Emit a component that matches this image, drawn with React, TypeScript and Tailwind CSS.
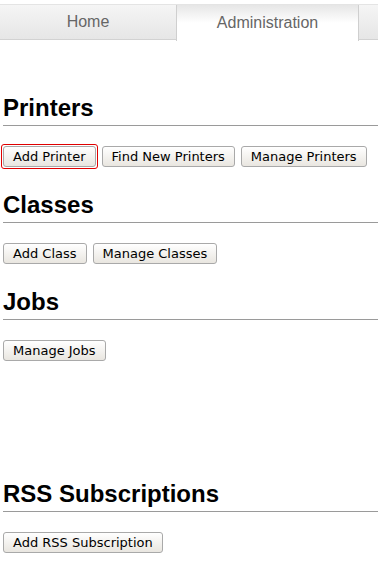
import React from "react";

const btn =
  "h-[21px] px-[9px] rounded-[3px] border border-[#a9a9a9] bg-gradient-to-b from-white to-[#e9e6e0] text-[13px] leading-[19px] text-black font-['DejaVu_Sans',sans-serif] whitespace-nowrap";

function Section({ title, buttons, first }: { title: string; buttons: string[]; first?: boolean }) {
  return (
    <div className="h-[97px] pl-[3px]">
      <h2 className="text-[24px] leading-[28px] font-bold text-black font-['Liberation_Sans',Arial,sans-serif]">
        {title}
      </h2>
      <div className="h-px bg-[#9a9a9a] mt-[3px]" />
      <div className="flex gap-[6px] mt-[20px]">
        {buttons.map((b, i) => (
          <div
            key={b}
            className={
              "flex " +
              (first && i === 0 ? "outline outline-1 outline-[#e00000] outline-offset-[1px] rounded-[1px]" : "")
            }
          >
            <button className={btn}>{b}</button>
          </div>
        ))}
      </div>
    </div>
  );
}

export default function App() {
  return (
    <div className="w-[378px] h-[569px] bg-white overflow-hidden">
      <div className="pt-[4px]">
        <div className="flex h-[36px] border-t border-[#e4e4e4] bg-gradient-to-b from-[#f5f5f5] to-[#e6e6e6] border-b border-b-[#d2d2d2] font-['Liberation_Sans',Arial,sans-serif] text-[16px] text-[#666]">
          <div className="w-[176px] flex items-center justify-center">Home</div>
          <div className="w-[183px] -mb-[2px] flex items-center justify-center bg-gradient-to-b from-[#e6e6e6] via-white to-white border-l border-r border-[#cfcfcf]">
            Administration
          </div>
          <div className="flex-1" />
        </div>
      </div>
      <div className="mt-[54px]">
        <Section title="Printers" buttons={["Add Printer", "Find New Printers", "Manage Printers"]} first />
        <Section title="Classes" buttons={["Add Class", "Manage Classes"]} />
        <Section title="Jobs" buttons={["Manage Jobs"]} />
        <div className="h-[95px]" />
        <Section title="RSS Subscriptions" buttons={["Add RSS Subscription"]} />
      </div>
    </div>
  );
}
